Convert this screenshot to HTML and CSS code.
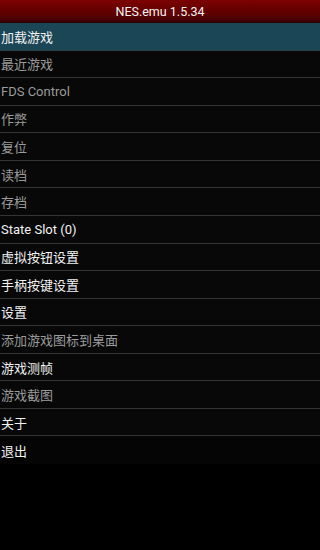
FILE: index.html
```html
<!DOCTYPE html>
<html>
<head>
<meta charset="utf-8">
<link rel="stylesheet" href="styles.css">
</head>
<body>
<div class="titlebar">NES.emu 1.5.34</div>
<ul class="menu">
  <li class="item selected">加载游戏</li>
  <li class="item off">最近游戏</li>
  <li class="item off">FDS Control</li>
  <li class="item off">作弊</li>
  <li class="item off">复位</li>
  <li class="item off">读档</li>
  <li class="item off">存档</li>
  <li class="item">State Slot (0)</li>
  <li class="item">虚拟按钮设置</li>
  <li class="item">手柄按键设置</li>
  <li class="item">设置</li>
  <li class="item off">添加游戏图标到桌面</li>
  <li class="item">游戏测帧</li>
  <li class="item off">游戏截图</li>
  <li class="item">关于</li>
  <li class="item last">退出</li>
</ul>
</body>
</html>
```

FILE: styles.css
```css
html, body {
  margin: 0;
  padding: 0;
  background: #000;
  height: 100%;
}
body {
  font-family: Roboto, "Noto Sans CJK SC", sans-serif;
  color: #f2f2f2;
}
.titlebar {
  height: 23px;
  box-sizing: border-box;
  background: linear-gradient(#7c0202, #5a0000 70%, #3a0000);
  border-bottom: 1px solid #2a0000;
  color: #f4f4f4;
  font-size: 12.5px;
  display: flex;
  align-items: center;
  justify-content: center;
}
.menu {
  list-style: none;
  margin: 0;
  padding: 0;
}
.item {
  height: 27.57px;
  box-sizing: border-box;
  background: #080808;
  border-bottom: 1.5px solid #343434;
  font-size: 13px;
  padding-left: 1px;
  display: flex;
  align-items: center;
  white-space: nowrap;
}
.item.selected {
  background: #1a4656;
  border-bottom-color: #2b3f46;
}
.item.off {
  color: #9b9b9b;
}
.item.last {
  border-bottom: none;
  background: #050505;
}
```
